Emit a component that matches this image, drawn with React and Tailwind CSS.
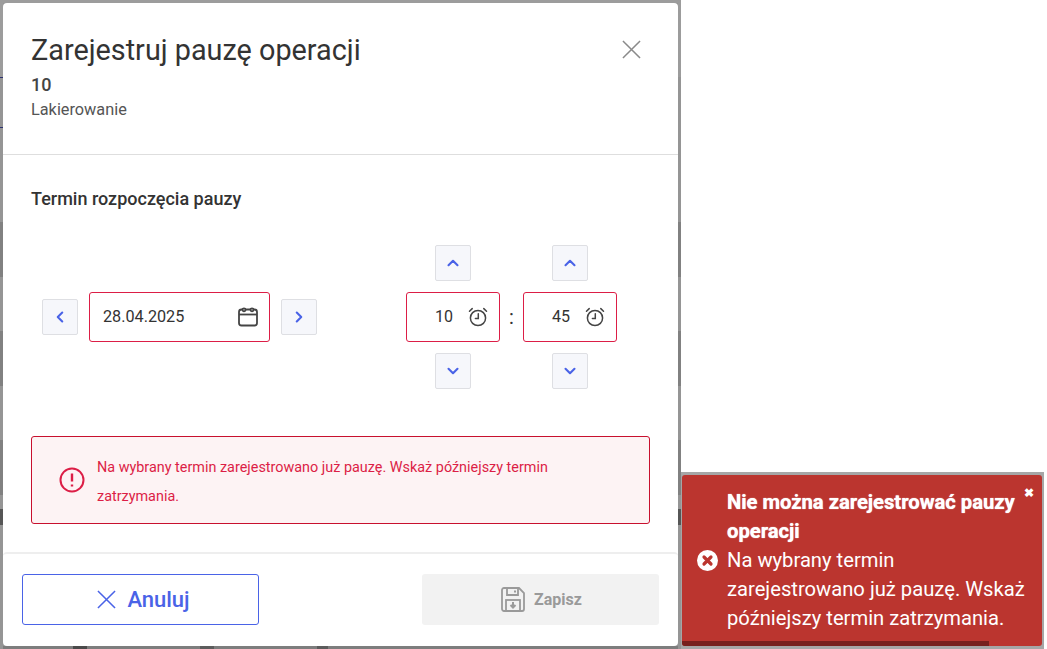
import React from 'react';
import { ChevronLeft, ChevronRight, ChevronUp, ChevronDown } from 'lucide-react';

const font = { fontFamily: 'Roboto, sans-serif' };

function CloseIcon({ size, className }) {
  return (
    <svg width={size} height={size} viewBox="0 0 20 20" fill="none" stroke="currentColor" strokeWidth="1.6" className={className}>
      <path d="M1 1l18 18M19 1L1 19" />
    </svg>
  );
}

function StepButton({ children }) {
  return (
    <button className="w-[36px] h-[36px] shrink-0 flex items-center justify-center bg-[#f6f7fb] border border-[#dedfe3] rounded-[2px] text-[#4a63e7]">
      {children}
    </button>
  );
}

function CalendarIcon() {
  return (
    <svg width="22" height="22" viewBox="0 0 22 22" fill="none" stroke="#444" strokeWidth="1.8">
      <rect x="2" y="3.5" width="18" height="16" rx="2.5" />
      <path d="M2 8.5h18" />
      <circle cx="7" cy="3.8" r="1.5" fill="#fff" />
      <circle cx="15" cy="3.8" r="1.5" fill="#fff" />
    </svg>
  );
}

function ClockIcon() {
  return (
    <svg width="20" height="20" viewBox="0 0 20 20" fill="none" stroke="#444" strokeWidth="1.5" strokeLinecap="round">
      <circle cx="10" cy="11" r="7.6" />
      <path d="M10.3 6.8v4.6H7.4" />
      <path d="M1.5 4.2 4.2 1.6M18.5 4.2l-2.7-2.6" />
    </svg>
  );
}

function TimeColumn({ value }) {
  return (
    <div className="flex flex-col items-center gap-[11px]">
      <StepButton><ChevronUp size={18} strokeWidth={2.8} /></StepButton>
      <div className="w-[94px] h-[50px] flex items-center justify-end pr-[11px] gap-[15px] bg-white border border-[#dc1e46] rounded-[3px] text-[16px] text-[#333]">
        <span>{value}</span>
        <ClockIcon />
      </div>
      <StepButton><ChevronDown size={18} strokeWidth={2.8} /></StepButton>
    </div>
  );
}

function SaveIcon() {
  return (
    <svg width="24" height="25" viewBox="0 0 24 25" fill="none" stroke="#9a9a9a" strokeWidth="1.8">
      <path d="M3 1h15l5 5v16a2 2 0 0 1-2 2H3a2 2 0 0 1-2-2V3a2 2 0 0 1 2-2z" />
      <path d="M6 1v7h11V1" />
      <rect x="5" y="13" width="14" height="11" />
      <path d="M12 15v5M9.5 18l2.5 2.5 2.5-2.5" strokeWidth="2" />
      <rect x="13" y="3.5" width="2" height="2" fill="#9a9a9a" stroke="none" />
    </svg>
  );
}

// what shows of the dimmed page beside the dialog
function SideStrip({ lines }) {
  return (
    <div className="w-[3px] h-full shrink-0 flex flex-col bg-[#959595]">
      <div className="h-[77px] shrink-0 bg-[#9c9c9c]" />
      <div className={lines ? 'h-[1px] shrink-0 bg-[#2c3170]' : 'h-[1px] shrink-0'} />
      <div className="h-[49px] shrink-0" />
      <div className={lines ? 'h-[1px] shrink-0 bg-[#2c3170]' : 'h-[1px] shrink-0'} />
      <div className="h-[94px] shrink-0" />
      <div className="h-[55px] shrink-0 bg-[#818181]" />
      <div className="h-[54px] shrink-0" />
      <div className="h-[55px] shrink-0 bg-[#818181]" />
      <div className="h-[54px] shrink-0" />
      <div className="h-[55px] shrink-0 bg-[#818181]" />
      <div className="h-[14px] shrink-0" />
      <div className="h-[16px] shrink-0 bg-[#565656]" />
    </div>
  );
}

export default function App() {
  return (
    <div className="w-[1047px] h-[649px] flex bg-white overflow-hidden" style={font}>
      {/* dialog on the dimmed page */}
      <div className="w-[681px] h-[649px] shrink-0 flex">
        <SideStrip lines />
        <div className="flex-1 flex flex-col bg-[#959595]">
          <div className="h-[3px] shrink-0 bg-[#9c9c9c]" />
          <div className="h-[643px] shrink-0 flex flex-col bg-white rounded-[4px]">
            <div className="h-[152px] shrink-0 border-b border-[#dedede] pl-[28px] pr-[37px] flex justify-between">
              <div>
                <h1 className="mt-[27px] text-[28.8px] leading-[40px] text-[#333]">Zarejestruj pauzę operacji</h1>
                <div className="mt-[3px] text-[18px] leading-[24px] font-medium text-[#444]">10</div>
                <div className="mt-[1px] text-[16.3px] leading-[24px] text-[#555]">Lakierowanie</div>
              </div>
              <CloseIcon size={19} className="mt-[37px] text-[#8a8a8a]" />
            </div>

            <div className="flex-1 px-[28px]">
              <div className="mt-[32px] text-[18px] leading-[24px] font-medium text-[#333]">Termin rozpoczęcia pauzy</div>
              <div className="mt-[34px] h-[144px] flex items-center pl-[11px]">
                <StepButton><ChevronLeft size={18} strokeWidth={2.8} /></StepButton>
                <div className="ml-[11px] w-[181px] h-[50px] flex items-center justify-between pl-[13px] pr-[10px] border border-[#dc1e46] rounded-[3px] text-[16.2px] text-[#333]">
                  <span>28.04.2025</span>
                  <CalendarIcon />
                </div>
                <div className="ml-[11px]">
                  <StepButton><ChevronRight size={18} strokeWidth={2.8} /></StepButton>
                </div>
                <div className="ml-[89px]"><TimeColumn value="10" /></div>
                <div className="w-[23px] text-center text-[20px] text-[#333]">:</div>
                <TimeColumn value="45" />
              </div>
              <div className="mt-[47px] w-[619px] h-[88px] flex items-center pl-[27px] pr-[40px] gap-[12px] bg-[#fdf3f4] border border-[#c8102e] rounded-[3px]">
                <svg width="26" height="26" viewBox="0 0 26 26" fill="none" stroke="#dc1e46" strokeWidth="2" className="shrink-0">
                  <circle cx="13" cy="13" r="11.5" />
                  <path d="M13 6.5v8M13 17.5v2" strokeWidth="2.4" />
                </svg>
                <p className="pt-[3px] text-[14.4px] leading-[29px] text-[#dc1e46]">Na wybrany termin zarejestrowano już pauzę. Wskaż późniejszy termin zatrzymania.</p>
              </div>
            </div>

            <div className="h-[94px] shrink-0 border-t-2 border-[#eeeeee] rounded-t-[4px] flex justify-between items-start pt-[20px] pl-[19px] pr-[19px]">
              <button className="w-[237px] h-[51px] flex items-center justify-center gap-[11px] pl-[6px] bg-white border border-[#4a63e7] rounded-[3px] text-[#4a63e7] text-[22px] font-medium">
                <CloseIcon size={19} />
                Anuluj
              </button>
              <button className="w-[237px] h-[51px] flex items-center justify-center gap-[9px] pl-[2px] bg-[#f2f2f2] rounded-[3px] text-[#9a9a9a] text-[16px] font-bold">
                <SaveIcon />
                Zapisz
              </button>
            </div>
          </div>
          <div className="h-[3px] shrink-0 flex bg-[#7d7d7d]">
            <div className="w-[70px] shrink-0" />
            <div className="w-[14px] shrink-0 bg-[#4a4a4a]" />
            <div className="w-[113px] shrink-0" />
            <div className="w-[14px] shrink-0 bg-[#5c5c5c]" />
            <div className="w-[103px] shrink-0" />
            <div className="w-[11px] shrink-0 bg-[#5c5c5c]" />
          </div>
        </div>
        <SideStrip />
      </div>

      {/* toast */}
      <div className="flex-1 flex flex-col justify-end">
        <div className="w-[363px] h-[177px] bg-[#a6a6a6] pt-[3px] pr-[2px] pb-[3px] pl-[1px]">
          <div className="relative h-full flex items-center bg-[#bb352f] rounded-[3px] pl-[15px] pr-[16px] text-white overflow-hidden">
            <svg width="21" height="21" viewBox="0 0 21 21" className="shrink-0">
              <circle cx="10.5" cy="10.5" r="10.5" fill="#fff" />
              <path d="M7 7l7 7M14 7l-7 7" stroke="#bb352f" strokeWidth="3.2" strokeLinecap="round" />
            </svg>
            <div className="ml-[9px] text-[20.2px] leading-[29px]">
              <div className="font-bold [text-shadow:0_0_1px_#fff] pr-[8px]">Nie można zarejestrować pauzy operacji</div>
              <div>Na wybrany termin zarejestrowano już pauzę. Wskaż późniejszy termin zatrzymania.</div>
            </div>
            <span className="absolute top-[11px] right-[8px] text-[12px] leading-[14px] font-bold">✖</span>
            <div className="absolute left-0 bottom-0 h-[5px] w-[307px] bg-[#77201d]" />
          </div>
        </div>
      </div>
    </div>
  );
}
